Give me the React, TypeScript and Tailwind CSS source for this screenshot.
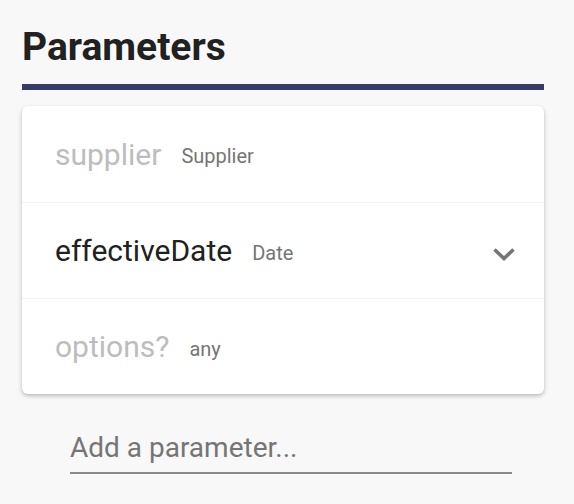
import React, { useState } from "react";

type Param = {
    name: string;
    type: string;
    active?: boolean;
};

const params: Param[] = [
    { name: "supplier", type: "Supplier" },
    { name: "effectiveDate", type: "Date", active: true },
    { name: "options?", type: "any" },
];

const Chevron: React.FC = () => (
    <svg width="24" height="16" viewBox="0 0 24 16" className="text-[#757575]">
        <polyline points="2.5,3.5 12,12.5 21.5,3.5" fill="none" stroke="currentColor" strokeWidth="3.6" />
    </svg>
);

export default function App() {
    const [value, setValue] = useState("");

    return (
        <div className="min-h-screen bg-[#f8f8f8] px-[22px] pt-[22px] font-['Roboto',sans-serif]">
            <h2 className="text-[39px] font-bold leading-[50px] text-[#212121]">Parameters</h2>
            <div className="mt-[12px] h-[6px] w-[522px] bg-[#363b6b]" />

            <div className="mt-[16px] w-[522px] overflow-hidden rounded-[6px] bg-white shadow-[0_2px_4px_rgba(0,0,0,0.25)]">
                {params.map((p, i) => (
                    <div
                        key={p.name}
                        className={`flex h-[96px] items-center pl-[33px] pr-[28px] ${i > 0 ? "border-t border-[#f3f3f3]" : ""}`}
                    >
                        <span className={`text-[30px] ${p.active ? "text-[#212121]" : "text-[#bdbdbd]"}`}>{p.name}</span>
                        <span className="ml-[20px] mt-[4px] text-[20px] text-[#757575]">{p.type}</span>
                        {p.active && (
                            <span className="ml-auto mt-[6px]">
                                <Chevron />
                            </span>
                        )}
                    </div>
                ))}
            </div>

            <div className="ml-[48px] mt-[28px] w-[442px] border-b-2 border-[#8a8a8a]">
                <input
                    value={value}
                    onChange={e => setValue(e.target.value)}
                    placeholder="Add a parameter..."
                    className="h-[50px] w-full bg-transparent text-[28px] text-[#212121] outline-none placeholder:text-[#757575]"
                />
            </div>
        </div>
    );
}
